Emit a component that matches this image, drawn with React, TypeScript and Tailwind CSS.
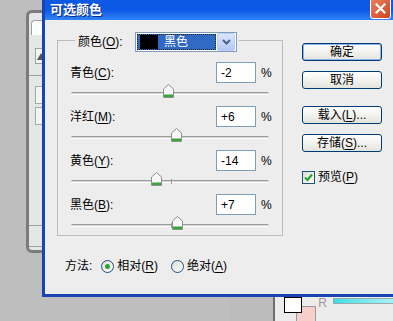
import React from 'react';

const font = "font-['Liberation_Sans','Noto_Sans_CJK_SC',sans-serif]";

function U({ children }: { children: React.ReactNode }) {
  return <span className="underline underline-offset-[2px]">{children}</span>;
}

function Thumb() {
  return (
    <svg width="11" height="14" viewBox="0 0 11 14">
      <path d="M5.5 0.5 L10.5 5 V13.5 H0.5 V5 Z" fill="#f7f7f7" stroke="#8f8f8f" />
      <rect x="1" y="10.5" width="9" height="2.5" fill="#3aa63a" />
    </svg>
  );
}

function Slider({ value }: { value: number }) {
  return (
    <div className="h-[23px] pt-[9px] pl-[13px]">
      <div className="relative h-[3px] w-[198px]">
        <div className="h-[3px] rounded-full border-t border-b border-t-[#9c9c9c] border-b-white bg-[#d6d6d6]" />
        <div className="absolute left-[100px] top-[-1px] h-[5px] w-px bg-[#9c9c9c]" />
        <div className="absolute top-[-8px]" style={{ left: 99 + value - 5 }}>
          <Thumb />
        </div>
      </div>
    </div>
  );
}

function Row({ name, k, value }: { name: string; k: string; value: number }) {
  const text = value > 0 ? `+${value}` : `${value}`;
  return (
    <div>
      <div className="flex h-[21px] items-center pl-[12px] pr-[10px]">
        <span className="flex-1">
          {name}(<U>{k}</U>):
        </span>
        <div className="flex h-[21px] w-[40px] items-center border border-[#7f9db9] bg-white pl-[4px]">{text}</div>
        <span className="ml-[5px] w-[11px]">%</span>
      </div>
      <Slider value={value} />
    </div>
  );
}

function Btn({ children, focus }: { children: React.ReactNode; focus?: boolean }) {
  return (
    <div
      className={
        'flex h-[18px] w-[80px] items-center justify-center rounded-[3px] border border-[#003c74] bg-gradient-to-b from-white to-[#e4e4de] ' +
        (focus ? 'shadow-[inset_0_0_0_1px_#8fb2ec]' : '')
      }
    >
      {children}
    </div>
  );
}

function Radio({ on }: { on?: boolean }) {
  return (
    <div className="flex h-[13px] w-[13px] items-center justify-center rounded-full border border-[#1c5180] bg-gradient-to-br from-[#dcdcd6] to-white">
      {on && <div className="h-[5px] w-[5px] rounded-full bg-[#2ea22e]" />}
    </div>
  );
}

export default function App() {
  const rows = [
    { name: '青色', k: 'C', value: -2 },
    { name: '洋红', k: 'M', value: 6 },
    { name: '黄色', k: 'Y', value: -14 },
    { name: '黑色', k: 'B', value: 7 },
  ];
  return (
    <div className={`relative h-[321px] w-[393px] overflow-hidden bg-[#bebebe] text-[12px] text-black ${font}`}>
      {/* window behind, left */}
      <div className="absolute left-[26px] top-[10px] h-[243px] w-[40px] rounded-[6px] border-[3px] border-[#7b7b7b] bg-[#e6e6e6]">
        <div className="ml-[2px] mt-[7px] h-[15px] rounded-tl-[4px] border-l border-t border-[#a0a0a0] bg-white" />
        <div className="ml-[6px] mt-[13px] flex h-[16px] items-center border border-[#a0a0a0] bg-[#f4f4f4] pl-[1px]">
          <div className="h-0 w-0 border-b-[7px] border-l-[4px] border-r-[4px] border-b-[#555] border-l-transparent border-r-transparent" />
        </div>
        <div className="mt-[11px] h-px bg-[#a0a0a0]" />
        <div className="ml-[6px] mt-[10px] h-[18px] border border-[#a8a8a8] bg-[#f4f4f4]" />
        <div className="ml-[6px] mt-[3px] h-[18px] border border-[#a8a8a8] bg-[#f4f4f4]" />
        <div className="mt-[100px] h-px bg-[#a0a0a0]" />
        <div className="mt-[20px] h-px bg-[#a0a0a0]" />
      </div>

      {/* window behind, bottom right */}
      <div className="absolute left-[230px] top-[290px] h-[40px] w-[45px] rounded-tr-[5px] border-r-[2px] border-t-[2px] border-[#6e6e6e] bg-[#bcbcbc]" />
      <div className="absolute left-[275px] top-[290px] h-[40px] w-[130px] bg-[#ececec]">
        <div className="relative ml-[9px] mt-[7px] flex">
          <div className="absolute left-[12px] top-[9px] h-[20px] w-[20px] border border-[#999] bg-[#f6cfc8]" />
          <div className="relative h-[16px] w-[20px] border border-black bg-white" />
          <span className="ml-[16px] text-[12px] leading-[13px] text-[#9a9a9a]">R</span>
          <div className="ml-[6px] mt-[1px] h-[6px] w-[80px] border border-[#9aa] bg-gradient-to-r from-[#38dde6] to-[#b5f6f9]" />
        </div>
      </div>

      {/* dialog */}
      <div className="absolute left-[42px] top-0 flex h-[297px] w-[354px] flex-col border-b-[3px] border-l-[3px] border-[#1743b3] bg-[#ededed]">
        <div className="flex h-[20px] shrink-0 items-start bg-gradient-to-b from-[#0c5ae4] via-[#0a58e6] to-[#3183f7] pl-[5px]">
          <span className="mt-[1px] flex-1 text-[13px] font-bold leading-[17px] text-white [text-shadow:1px_1px_0_#0a2a8a]">
            可选颜色
          </span>
          <div className="mr-[5px] mt-[-2px] flex h-[21px] w-[21px] items-center justify-center rounded-[3px] border border-white bg-gradient-to-br from-[#e9805e] to-[#cf4219]">
            <svg width="11" height="11" viewBox="0 0 11 11">
              <path d="M1.5 1.5 L9.5 9.5 M9.5 1.5 L1.5 9.5" stroke="white" strokeWidth="2.2" strokeLinecap="square" />
            </svg>
          </div>
        </div>

        <div className="flex pl-[12px]">
          {/* group box */}
          <div className="mt-[20px] h-[196px] w-[226px] border border-[#bcbcbc]">
            <div className="-mt-[9px] ml-[17px] flex w-fit items-center bg-[#ededed] pl-[3px] pr-[2px]">
              <span className="w-[57px]">
                颜色(<U>O</U>):
              </span>
              <div className="flex h-[20px] w-[102px] items-center border border-[#7f9db9] bg-white p-[1px]">
                <div className="flex h-[16px] flex-1 items-center border border-dotted border-[#222] bg-[#316ac5] pl-[2px]">
                  <div className="h-[14px] w-[18px] bg-black" />
                  <span className="ml-[6px] text-white">黑色</span>
                </div>
                <div className="ml-[1px] flex h-[18px] w-[18px] items-center justify-center rounded-[2px] border border-[#b9cdf5] bg-gradient-to-b from-[#dbe6fd] to-[#b3c8f7]">
                  <svg width="9" height="6" viewBox="0 0 9 6">
                    <path d="M1 1 L4.5 4.5 L8 1" stroke="#4d6185" strokeWidth="2" fill="none" />
                  </svg>
                </div>
              </div>
            </div>
            <div className="mt-[10px]">
              {rows.map((r) => (
                <Row key={r.k} {...r} />
              ))}
            </div>
          </div>

          {/* buttons */}
          <div className="ml-[19px] mt-[23px] flex flex-col">
            <Btn focus>确定</Btn>
            <div className="mt-[10px]">
              <Btn>取消</Btn>
            </div>
            <div className="mt-[17px]">
              <Btn>
                载入(<U>L</U>)...
              </Btn>
            </div>
            <div className="mt-[10px]">
              <Btn>
                存储(<U>S</U>)...
              </Btn>
            </div>
            <div className="mt-[16px] flex items-center">
              <div className="flex h-[13px] w-[13px] items-center justify-center border border-[#1c5180] bg-gradient-to-br from-[#dcdcd6] to-white">
                <svg width="9" height="9" viewBox="0 0 9 9">
                  <path d="M1 4.5 L3.5 7 L8 1.5" stroke="#21a121" strokeWidth="2" fill="none" />
                </svg>
              </div>
              <span className="ml-[3px]">
                预览(<U>P</U>)
              </span>
            </div>
          </div>
        </div>

        {/* method */}
        <div className="mt-[23px] flex h-[14px] items-center pl-[20px]">
          <span>方法:</span>
          <div className="ml-[9px]">
            <Radio on />
          </div>
          <span className="ml-[3px]">
            相对(<U>R</U>)
          </span>
          <div className="ml-[13px]">
            <Radio />
          </div>
          <span className="ml-[3px]">
            绝对(<U>A</U>)
          </span>
        </div>
      </div>
    </div>
  );
}
